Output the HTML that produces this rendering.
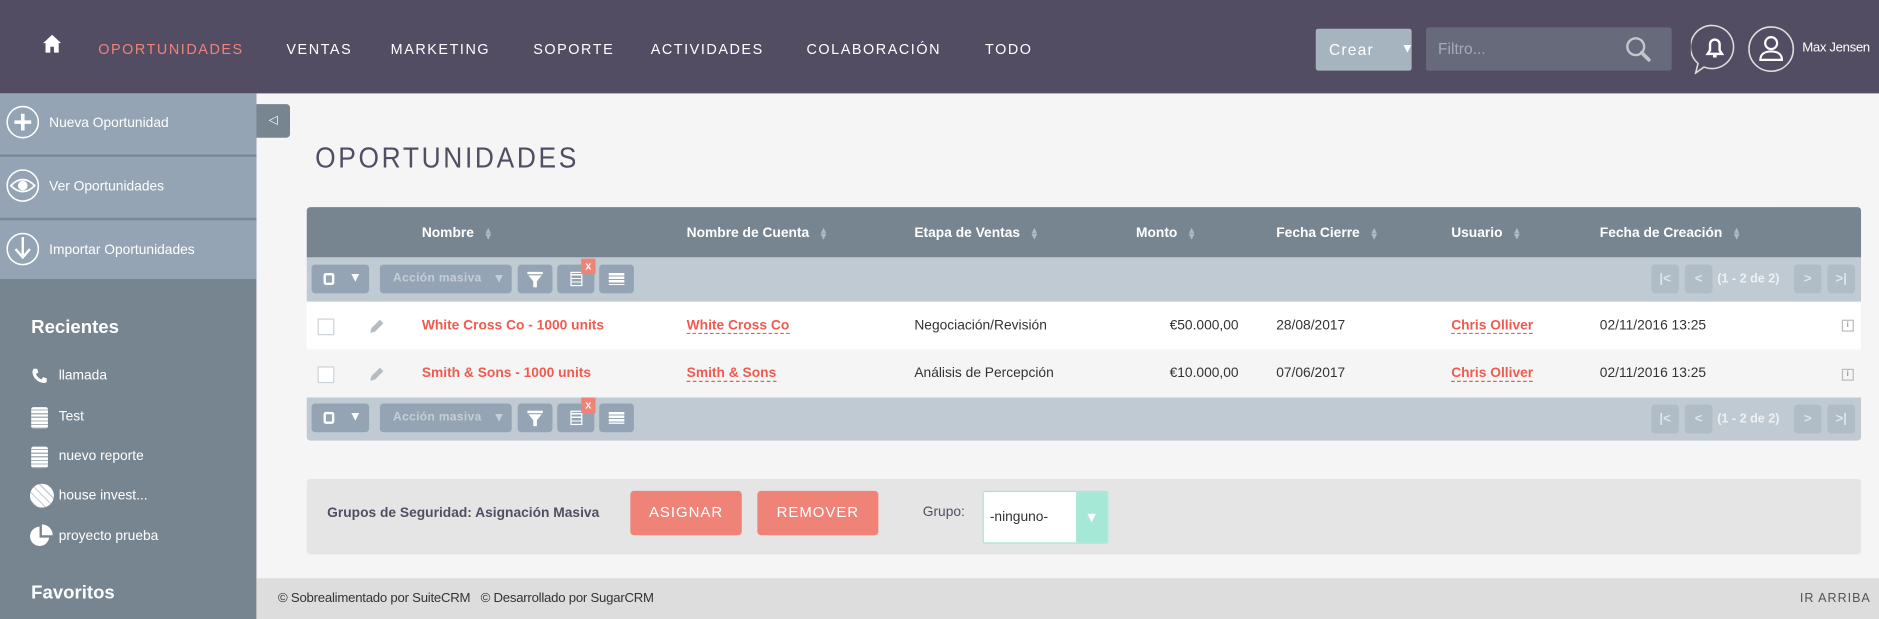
<!DOCTYPE html>
<html><head><meta charset="utf-8">
<style>
*{box-sizing:border-box;margin:0;padding:0;white-space:nowrap}
html,body{width:1879px;height:619px;overflow:hidden;background:#f5f5f5}
#w{position:absolute;left:0;top:0;width:1568px;height:517px;transform:scale(1.19834,1.1973);transform-origin:0 0;font-family:"Liberation Sans",sans-serif;font-size:12px;color:#333}
.a{position:absolute}
.hdr{left:0;top:0;width:1568px;height:78px;background:#534d64}
.nav{top:34px;font-size:12px;letter-spacing:1.3px;color:#fff}
.side{left:0;top:78px;width:214px;height:439px;background:#778591}
.act{left:0;width:214px;height:51px;background:#94a4b4;color:#fff;font-size:11.5px}
.act span{position:absolute;left:41px;top:19px}
.act svg{position:absolute;left:5px;top:10px}
.rec{left:24px;color:#fff;font-size:11.5px}
.th{top:189px;color:#fff;font-weight:bold;font-size:11.5px}
.srt{display:inline-block;margin-left:8px;color:#b0bac3;font-size:8px;line-height:5px;vertical-align:middle}
.btn{background:#94a4b4;border-radius:3px;height:24px}
.pg{background:#b0bcc6;border-radius:3px;height:24px;width:23px;color:#dfe5ea;font-weight:bold;text-align:center;line-height:24px;font-size:11px}
.td{font-size:11.5px}
.lnk{color:#f05b4f;border-bottom:1px dashed #f05b4f;font-weight:bold}
.red{color:#f05b4f;font-weight:bold}
.chk{width:14px;height:14px;border:1px solid #ccd3d9;background:#fff}
</style></head><body><div id="w">
<div class="a hdr"></div>
<svg class="a" style="left:35px;top:28px" width="17" height="17" viewBox="0 0 17 17"><path d="M8.5 1L1 8h2v8h4v-5h3v5h4V8h2z" fill="#fff"/></svg>
<div class="a nav" style="left:82px;color:#f08377">OPORTUNIDADES</div>
<div class="a nav" style="left:239px">VENTAS</div>
<div class="a nav" style="left:326px">MARKETING</div>
<div class="a nav" style="left:445px">SOPORTE</div>
<div class="a nav" style="left:543px">ACTIVIDADES</div>
<div class="a nav" style="left:673px">COLABORACIÓN</div>
<div class="a nav" style="left:822px">TODO</div>
<div class="a" style="left:1098px;top:24px;width:80px;height:35px;background:#a5b4bf;border-radius:2px;color:#fff;font-size:13px;letter-spacing:1px;line-height:35px;padding-left:11px">Crear<span style="position:absolute;left:71px;font-size:11px">▼</span></div>
<div class="a" style="left:1190px;top:23px;width:205px;height:36px;background:#676a7b;border-radius:2px;color:#a7a9b5;font-size:13px;line-height:36px;padding-left:10px">Filtro...</div>
<svg class="a" style="left:1355px;top:29px" width="26" height="26" viewBox="0 0 26 26"><circle cx="10" cy="10" r="7" fill="none" stroke="#c4c6cc" stroke-width="2"/><path d="M15 15l6 6" stroke="#c4c6cc" stroke-width="3" stroke-linecap="round"/></svg>
<svg class="a" style="left:1411px;top:20px" width="40" height="42" viewBox="0 0 40 42"><path d="M6 33A18 18 0 1 1 11 36L4 41z" fill="none" stroke="#ddd" stroke-width="1.3"/><path d="M14 25h12l-2-3v-5a4 4 0 0 0-8 0v5z M18.5 27h3" fill="none" stroke="#fff" stroke-width="2"/></svg>
<svg class="a" style="left:1458px;top:21px" width="40" height="40" viewBox="0 0 40 40"><circle cx="20" cy="20" r="18.5" fill="none" stroke="#ddd" stroke-width="1.3"/><circle cx="20" cy="15" r="5" fill="none" stroke="#fff" stroke-width="1.8"/><path d="M11 29c0-5 4-7 9-7s9 2 9 7z" fill="none" stroke="#fff" stroke-width="1.8"/></svg>
<div class="a" style="left:1504px;top:34px;color:#fff;font-size:11px;letter-spacing:-0.3px">Max Jensen</div>

<div class="a side"></div>
<div class="a act" style="top:78px"><svg width="30" height="30" viewBox="0 0 30 30"><circle cx="14" cy="14" r="13" fill="none" stroke="#fff" stroke-width="1.3"/><path d="M14 7v14M7 14h14" stroke="#fff" stroke-width="3"/></svg><span>Nueva Oportunidad</span></div>
<div class="a" style="left:0;top:129px;width:214px;height:2px;background:#7a8998"></div>
<div class="a act" style="top:131px"><svg width="30" height="30" viewBox="0 0 30 30"><circle cx="14" cy="14" r="13" fill="none" stroke="#fff" stroke-width="1.3"/><path d="M4 14Q14 4 24 14Q14 24 4 14z" fill="none" stroke="#fff" stroke-width="1.5"/><circle cx="14" cy="14" r="4" fill="#fff"/></svg><span>Ver Oportunidades</span></div>
<div class="a" style="left:0;top:182px;width:214px;height:2px;background:#7a8998"></div>
<div class="a act" style="top:184px;height:49px"><svg width="30" height="30" viewBox="0 0 30 30"><circle cx="14" cy="14" r="13" fill="none" stroke="#fff" stroke-width="1.3"/><path d="M14 4v15M8 14l6 7 6-7" stroke="#fff" stroke-width="2" fill="none"/></svg><span>Importar Oportunidades</span></div>
<div class="a" style="left:26px;top:265px;color:#fff;font-size:15.5px;font-weight:bold">Recientes</div>
<div class="a rec" style="left:49px;top:308px">llamada</div>
<svg class="a" style="left:26px;top:307px" width="14" height="14" viewBox="0 0 14 14"><path d="M2 1l3 0 1 3-2 1.5q1.5 3 4.5 4.5L10 8l3 1v3q-1 1-3 1Q2 11 1 4q0-2 1-3z" fill="#fff"/></svg>
<div class="a rec" style="left:49px;top:342px">Test</div>
<div class="a" style="left:26px;top:340px;width:14px;height:18px;background:#fff;border-radius:2px;background-image:repeating-linear-gradient(#fff 0 2px,#aab3bb 2px 3px)"></div>
<div class="a rec" style="left:49px;top:375px">nuevo reporte</div>
<div class="a" style="left:26px;top:373px;width:14px;height:18px;background:#fff;border-radius:2px;background-image:repeating-linear-gradient(#fff 0 2px,#aab3bb 2px 3px)"></div>
<div class="a rec" style="left:49px;top:408px">house invest...</div>
<div class="a" style="left:25px;top:404px;width:20px;height:20px;border-radius:50%;background:#fff;background-image:repeating-linear-gradient(45deg,#fff 0 4px,#c5ccd2 4px 5px)"></div>
<div class="a rec" style="left:49px;top:442px">proyecto prueba</div>
<svg class="a" style="left:24px;top:438px" width="20" height="20" viewBox="0 0 20 20"><path d="M9 2a8 8 0 1 0 8 9H9z" fill="#fff"/><path d="M11 0v9h9a9 9 0 0 0-9-9z" fill="#fff"/></svg>
<div class="a" style="left:26px;top:487px;color:#fff;font-size:15.5px;font-weight:bold">Favoritos</div>

<div class="a" style="left:214px;top:87px;width:28px;height:28px;background:#778591;border-radius:0 3px 3px 0;color:#fff;font-size:10px;text-align:center;line-height:28px">◁</div>
<div class="a" style="left:263px;top:119px;font-size:22px;letter-spacing:2.2px;color:#534d64;transform:scaleY(1.1)">OPORTUNIDADES</div>

<div class="a" style="left:256px;top:173px;width:1297px;height:42px;background:#778591;border-radius:3px 3px 0 0"></div>
<div class="a th" style="left:352px">Nombre<span class="srt">▲<br>▼</span></div>
<div class="a th" style="left:573px">Nombre de Cuenta<span class="srt">▲<br>▼</span></div>
<div class="a th" style="left:763px">Etapa de Ventas<span class="srt">▲<br>▼</span></div>
<div class="a th" style="left:948px">Monto<span class="srt">▲<br>▼</span></div>
<div class="a th" style="left:1065px">Fecha Cierre<span class="srt">▲<br>▼</span></div>
<div class="a th" style="left:1211px">Usuario<span class="srt">▲<br>▼</span></div>
<div class="a th" style="left:1335px">Fecha de Creación<span class="srt">▲<br>▼</span></div>

<div class="a" style="left:256px;top:215px;width:1297px;height:37px;background:#c0cad2"></div>
<div class="a" style="left:256px;top:252px;width:1297px;height:40px;background:#fff"></div>
<div class="a" style="left:256px;top:292px;width:1297px;height:40px;background:#f5f5f5"></div>
<div class="a" style="left:256px;top:332px;width:1297px;height:36px;background:#c0cad2;border-radius:0 0 3px 3px"></div>

<div class="a btn" style="left:260px;top:221px;width:48px"><div class="a" style="left:10px;top:7px;width:9px;height:10px;border:2px solid #fff;border-radius:2px"></div><div class="a" style="left:31px;top:5px;color:#fff;font-size:11px">▼</div></div>
<div class="a btn" style="left:317px;top:221px;width:110px;color:#c5ced6;font-weight:bold;font-size:10px;letter-spacing:.3px;line-height:24px;padding-left:11px">Acción masiva<span style="position:absolute;left:94px;font-size:11px">▼</span></div>
<div class="a btn" style="left:432px;top:221px;width:29px"><svg class="a" style="left:8px;top:6px" width="13" height="13" viewBox="0 0 13 13"><path d="M0 0h13v2H0zM1 3h11L8 8v5H5V8z" fill="#fff"/></svg></div>
<div class="a btn" style="left:465px;top:221px;width:31px"><div class="a" style="left:11px;top:6px;width:10px;height:12px;border:1px solid #fff;background:repeating-linear-gradient(#94a4b4 0 1px,#fff 1px 2px,#94a4b4 2px 3px)"></div></div>
<div class="a" style="left:485px;top:216px;width:12px;height:13px;background:#f08377;color:#fff;font-size:9px;font-weight:bold;text-align:center;line-height:12px">x</div>
<div class="a btn" style="left:500px;top:221px;width:29px"><div class="a" style="left:8px;top:7px;width:13px;height:10px;background:repeating-linear-gradient(#fff 0 2px,#94a4b4 2px 3px)"></div></div>
<div class="a pg" style="left:1378px;top:221px">|&lt;</div>
<div class="a pg" style="left:1406px;top:221px">&lt;</div>
<div class="a" style="left:1433px;top:227px;color:#eef1f4;font-weight:bold;font-size:10.5px">(1 - 2 de 2)</div>
<div class="a pg" style="left:1497px;top:221px">&gt;</div>
<div class="a pg" style="left:1525px;top:221px">&gt;|</div>

<div class="a btn" style="left:260px;top:337px;width:48px"><div class="a" style="left:10px;top:7px;width:9px;height:10px;border:2px solid #fff;border-radius:2px"></div><div class="a" style="left:31px;top:5px;color:#fff;font-size:11px">▼</div></div>
<div class="a btn" style="left:317px;top:337px;width:110px;color:#c5ced6;font-weight:bold;font-size:10px;letter-spacing:.3px;line-height:24px;padding-left:11px">Acción masiva<span style="position:absolute;left:94px;font-size:11px">▼</span></div>
<div class="a btn" style="left:432px;top:337px;width:29px"><svg class="a" style="left:8px;top:6px" width="13" height="13" viewBox="0 0 13 13"><path d="M0 0h13v2H0zM1 3h11L8 8v5H5V8z" fill="#fff"/></svg></div>
<div class="a btn" style="left:465px;top:337px;width:31px"><div class="a" style="left:11px;top:6px;width:10px;height:12px;border:1px solid #fff;background:repeating-linear-gradient(#94a4b4 0 1px,#fff 1px 2px,#94a4b4 2px 3px)"></div></div>
<div class="a" style="left:485px;top:332px;width:12px;height:13px;background:#f08377;color:#fff;font-size:9px;font-weight:bold;text-align:center;line-height:12px">x</div>
<div class="a btn" style="left:500px;top:337px;width:29px"><div class="a" style="left:8px;top:7px;width:13px;height:10px;background:repeating-linear-gradient(#fff 0 2px,#94a4b4 2px 3px)"></div></div>
<div class="a pg" style="left:1378px;top:338px">|&lt;</div>
<div class="a pg" style="left:1406px;top:338px">&lt;</div>
<div class="a" style="left:1433px;top:344px;color:#eef1f4;font-weight:bold;font-size:10.5px">(1 - 2 de 2)</div>
<div class="a pg" style="left:1497px;top:338px">&gt;</div>
<div class="a pg" style="left:1525px;top:338px">&gt;|</div>

<div class="a chk" style="left:265px;top:266px"></div>
<svg class="a" style="left:308px;top:265px" width="14" height="14" viewBox="0 0 14 14"><path d="M1 13l1-4 7-7 3 3-7 7z" fill="#b5bdc4"/></svg>
<div class="a td red" style="left:352px;top:266px">White Cross Co - 1000 units</div>
<div class="a td lnk" style="left:573px;top:266px">White Cross Co</div>
<div class="a td" style="left:763px;top:266px">Negociación/Revisión</div>
<div class="a td" style="left:976px;top:266px">€50.000,00</div>
<div class="a td" style="left:1065px;top:266px">28/08/2017</div>
<div class="a td lnk" style="left:1211px;top:266px">Chris Olliver</div>
<div class="a td" style="left:1335px;top:266px">02/11/2016 13:25</div>
<div class="a" style="left:1537px;top:267px;width:10px;height:10px;border:1px solid #bbb;font-size:7px;text-align:center;line-height:8px;color:#666">i</div>

<div class="a chk" style="left:265px;top:306px"></div>
<svg class="a" style="left:308px;top:305px" width="14" height="14" viewBox="0 0 14 14"><path d="M1 13l1-4 7-7 3 3-7 7z" fill="#b5bdc4"/></svg>
<div class="a td red" style="left:352px;top:306px">Smith &amp; Sons - 1000 units</div>
<div class="a td lnk" style="left:573px;top:306px">Smith &amp; Sons</div>
<div class="a td" style="left:763px;top:306px">Análisis de Percepción</div>
<div class="a td" style="left:976px;top:306px">€10.000,00</div>
<div class="a td" style="left:1065px;top:306px">07/06/2017</div>
<div class="a td lnk" style="left:1211px;top:306px">Chris Olliver</div>
<div class="a td" style="left:1335px;top:306px">02/11/2016 13:25</div>
<div class="a" style="left:1537px;top:308px;width:10px;height:10px;border:1px solid #bbb;font-size:7px;text-align:center;line-height:8px;color:#666">i</div>

<div class="a" style="left:256px;top:400px;width:1297px;height:63px;background:#e5e5e5;border-radius:3px"></div>
<div class="a" style="left:273px;top:423px;color:#534d64;font-weight:bold;font-size:11.5px">Grupos de Seguridad: Asignación Masiva</div>
<div class="a" style="left:526px;top:410px;width:93px;height:37px;background:#f08377;border-radius:3px;color:#fff;font-size:12.5px;letter-spacing:.8px;text-align:center;line-height:37px">ASIGNAR</div>
<div class="a" style="left:632px;top:410px;width:101px;height:37px;background:#f08377;border-radius:3px;color:#fff;font-size:12.5px;letter-spacing:.8px;text-align:center;line-height:37px">REMOVER</div>
<div class="a" style="left:770px;top:422px;color:#534d64;font-size:11.5px">Grupo:</div>
<div class="a" style="left:820px;top:410px;width:105px;height:44px;background:#fff;border:1px solid #a5e8d6;border-radius:2px"></div>
<div class="a" style="left:898px;top:411px;width:26px;height:42px;background:#a5e8d6;color:#fff;font-size:12px;text-align:center;line-height:42px">▼</div>
<div class="a" style="left:826px;top:426px;font-size:11.5px;color:#333">-ninguno-</div>

<div class="a" style="left:214px;top:483px;width:1354px;height:34px;background:#dddddd"></div>
<div class="a" style="left:232px;top:494px;font-size:11px;color:#333;letter-spacing:-0.2px">© Sobrealimentado por SuiteCRM &nbsp;&nbsp;© Desarrollado por SugarCRM</div>
<div class="a" style="left:1502px;top:494px;font-size:10.5px;letter-spacing:.8px;color:#555">IR ARRIBA</div>
</div></body></html>
